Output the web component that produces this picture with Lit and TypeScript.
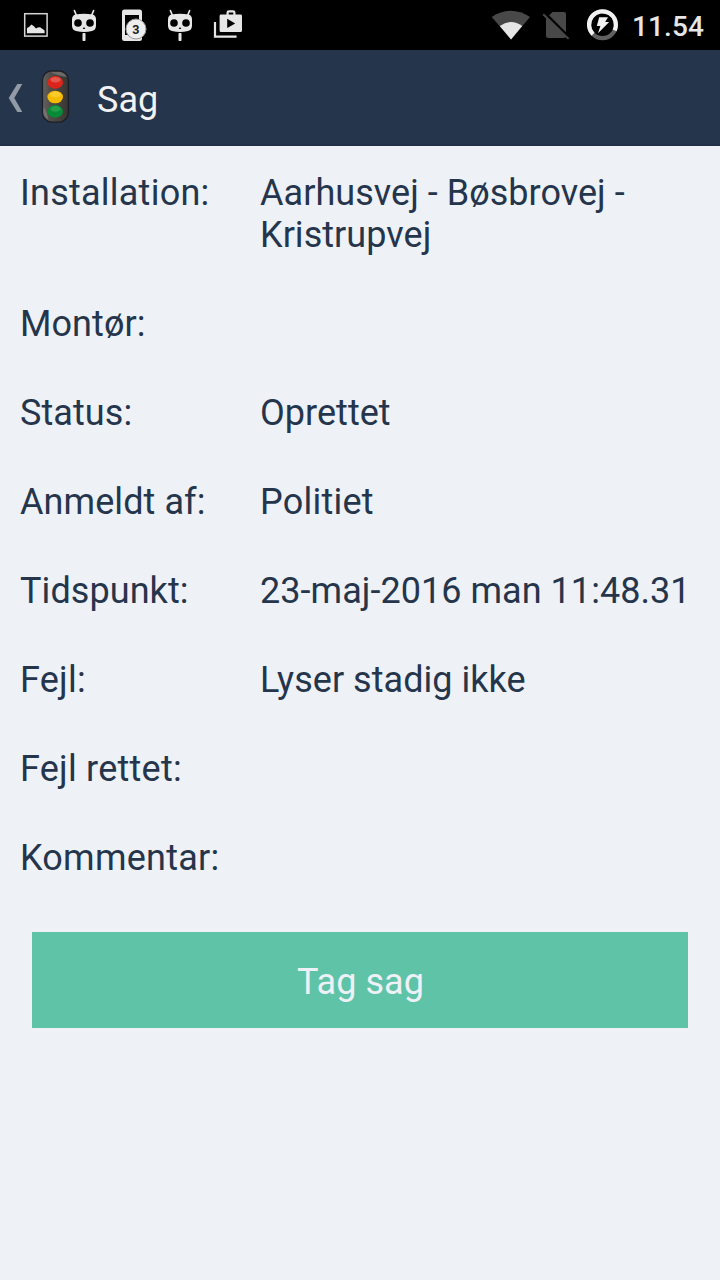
import { LitElement, html, css, svg } from "lit";
import { customElement } from "lit/decorators.js";
import { classMap } from "lit/directives/class-map.js";

const robotHead = (x: number) => svg`
  <g transform="translate(${x} 0)">
    <path d="M2.4 10.6 L4.4 15.4 M21.6 10.6 L19.6 15.4" stroke="#e6e6e6" stroke-width="1.6" stroke-linecap="round" fill="none"/>
    <path d="M3.4 14.6 Q12 12.8 20.6 14.6 Q23.6 15.4 24 19 V26 Q23.8 30 20 31 Q12 32.8 4 31 Q.2 30 0 26 V19 Q.4 15.4 3.4 14.6Z" fill="#e6e6e6"/>
    <circle cx="6" cy="23" r="3.8"/><circle cx="18" cy="23" r="3.8"/>
    <ellipse cx="12" cy="28.3" rx="1.2" ry=".7"/>
    <rect x="10.5" y="33" width="3" height="8" rx=".8" fill="#e6e6e6"/>
  </g>`;

@customElement("status-bar")
class StatusBar extends LitElement {
  static styles = css`
    :host { display: flex; justify-content: space-between; height: 50px; background: #000; }
    .group { display: flex; }
    .notices { padding-left: 12px; }
    svg { display: block; height: 50px; }
    .slot { width: 48px; }
    .signals { width: 144px; }
    .clock { width: 88px; font: 500 28px/48px Roboto, sans-serif; letter-spacing: .1px; color: #e6e6e6; white-space: nowrap; padding-top: 3px; box-sizing: border-box; }
  `;
  render() {
    return html`
      <div class="group notices">
        <svg class="slot" viewBox="12 0 48 50">
          <rect x="24.7" y="13.7" width="22.4" height="22.4" fill="none" stroke="#d4d4d4" stroke-width="1.5"/>
          <path d="M27 33.2 V28 Q29 27.5 31.5 24.5 Q34 26 36 28.6 Q38.5 26.5 40.5 27.4 L44.6 30.4 V33.2Z" fill="#e6e6e6"/>
        </svg>
        <svg class="slot" viewBox="60 0 48 50">${robotHead(72)}</svg>
        <svg class="slot" viewBox="108 0 48 50">
          <path fill-rule="evenodd" fill="#e6e6e6" d="M124.5 9.5 H139.5 Q142 9.5 142 12 V38.5 Q142 41 139.5 41 H124.5 Q122 41 122 38.5 V12 Q122 9.5 124.5 9.5Z M125 15 V35 H139 V15Z"/>
          <circle cx="136" cy="29" r="10" fill="#eee" stroke="#999" stroke-width="1"/>
          <text x="135.8" y="33.6" text-anchor="middle" font-family="Roboto" font-weight="700" font-size="12.5" fill="#222">3</text>
        </svg>
        <svg class="slot" viewBox="156 0 48 50">${robotHead(168)}</svg>
        <svg class="slot" viewBox="204 0 48 50">
          <path d="M215 22 V36.7 H236.6" fill="none" stroke="#e6e6e6" stroke-width="2.2"/>
          <path fill-rule="evenodd" fill="#e6e6e6" d="M226.5 14.6 V12.5 Q226.5 10.2 229 10.2 H233 Q235.5 10.2 235.5 12.5 V14.6 H240.5 Q242 14.6 242 16 V30.5 Q242 32 240.5 32 H221 Q219.6 32 219.6 30.5 V16 Q219.6 14.6 221 14.6Z M228.7 14.6 H233.3 V12.4 H228.7Z M227.2 18.8 V28 L235.2 23.4Z"/>
        </svg>
      </div>
      <div class="group">
        <svg class="signals" viewBox="488 0 144 50">
          <path d="M491.7 17 Q510.8 4.6 530 17 L511 39.4Z" fill="#484848"/>
          <path d="M499.8 26.1 Q511 18 522.2 26.1 L511 39.4Z" fill="#e6e6e6"/>
          <path d="M552.5 12 H564 Q566 12 566 14 V36 Q566 38 564 38 H548 Q546 38 546 36 V18.5Z" fill="#484848"/>
          <path d="M543.8 12.5 L570 38.7" stroke="#000" stroke-width="3.4"/>
          <path d="M543.2 14.2 L568.6 38.9" stroke="#484848" stroke-width="2"/>
          <circle cx="602.5" cy="24.7" r="13.4" fill="none" stroke="#606060" stroke-width="4.2"/>
          <path d="M593 34.2 A13.4 13.4 0 1 1 614.6 30.4" fill="none" stroke="#f2f2f2" stroke-width="4.2"/>
          <path d="M599.2 17.2 H608 L605.2 22 H609.2 L598 33.2 L600.4 26 H596.8Z" fill="#f2f2f2"/>
        </svg>
        <div class="clock">11.54</div>
      </div>`;
  }
}

@customElement("title-bar")
class TitleBar extends LitElement {
  static styles = css`
    :host { display: flex; align-items: center; height: 96px; background: linear-gradient(#25354b 0 93px, #202f45 96px); color: #f2f2f2; font: 36px/42px Roboto, sans-serif; }
    svg { display: block; width: 97px; height: 96px; }
    .title { padding-top: 3px; }
  `;
  render() {
    return html`
      <svg viewBox="0 50 97 96">
        <defs>
          <linearGradient id="case" x1="0" y1="0" x2="1" y2="0">
            <stop offset="0" stop-color="#66625f"/><stop offset=".3" stop-color="#514d4a"/><stop offset="1" stop-color="#383430"/>
          </linearGradient>
        </defs>
        <path d="M17.3 84 H22.3 L14.3 98 L22.3 112 H17.3 L8.7 98Z" fill="#919aa5"/>
        <path d="M51 70.8 H60 Q63 71 65.5 73.5 Q68.4 76.5 68.4 80 V113 Q68.4 116.5 65.5 119.3 Q63 122 60 122.2 H51 Q48 122 45.3 119.3 Q42.5 116.5 42.5 113 V80 Q42.5 76.5 45.3 73.5 Q48 71 51 70.8Z" fill="url(#case)" stroke="#1b1f27" stroke-width="1.3"/>
        <path d="M52 72 H60 Q65 73 67 77 Q61 76.5 52 73Z" fill="#6e6b68"/>
        <path d="M43.4 107 Q47.5 112 48 119.5 Q43.6 117 43.4 112Z" fill="#75716e"/>
        <ellipse cx="55.2" cy="82.4" rx="7.8" ry="6.3" fill="#db241c"/>
        <ellipse cx="55.5" cy="79.8" rx="5.2" ry="2.8" fill="#e5564d"/>
        <ellipse cx="55.2" cy="97" rx="7.8" ry="6.3" fill="#f4ba00"/>
        <ellipse cx="55.5" cy="94.4" rx="5.2" ry="2.8" fill="#fbcb2c"/>
        <ellipse cx="55.2" cy="111.4" rx="7.8" ry="6.3" fill="#078a37"/>
        <ellipse cx="55.5" cy="108.9" rx="5.2" ry="2.8" fill="#239e49"/>
      </svg>
      <div class="title">Sag</div>`;
  }
}

interface Field {
  label: string;
  value: string;
  looseLabel?: boolean;
  looseValue?: boolean;
}

@customElement("app-root")
class AppRoot extends LitElement {
  static styles = css`
    :host { display: flex; flex-direction: column; height: 1280px; background: #eef1f6; font: 36px/42px Roboto, sans-serif; color: #25354b; }
    .fields { display: grid; grid-template-columns: 240px 1fr; row-gap: 47px; padding: 26px 20px 53px; margin: 0; }
    dt, dd { margin: 0; min-height: 42px; letter-spacing: .04px; }
    dt { white-space: nowrap; letter-spacing: .08px; }
    .loose { letter-spacing: .24px; }
    .take { display: block; margin: 0 32px; height: 96px; padding: 3px 0 0 1px; border: 0; background: #5fc3a8; color: #eef1f6; font: 36px/42px Roboto, sans-serif; letter-spacing: .08px; }
  `;
  private fields: Field[] = [
    { label: "Installation:", value: "Aarhusvej - Bøsbrovej - Kristrupvej", looseLabel: true },
    { label: "Montør:", value: "" },
    { label: "Status:", value: "Oprettet" },
    { label: "Anmeldt af:", value: "Politiet", looseValue: true },
    { label: "Tidspunkt:", value: "23-maj-2016 man 11:48.31" },
    { label: "Fejl:", value: "Lyser stadig ikke", looseLabel: true },
    { label: "Fejl rettet:", value: "", looseLabel: true },
    { label: "Kommentar:", value: "", looseLabel: true },
  ];
  render() {
    return html`
      <status-bar></status-bar>
      <title-bar></title-bar>
      <dl class="fields">
        ${this.fields.map(
          (f) => html`
            <dt class=${classMap({ loose: !!f.looseLabel })}>${f.label}</dt>
            <dd class=${classMap({ loose: !!f.looseValue })}>${f.value}</dd>`
        )}
      </dl>
      <button class="take">Tag sag</button>`;
  }
}
